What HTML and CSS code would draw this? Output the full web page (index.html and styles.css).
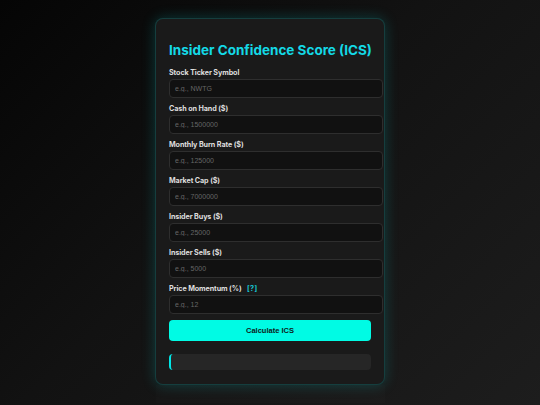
FILE: index.html
```html
<!DOCTYPE html>
<html lang="en">
<head>
<meta charset="utf-8">
<title>Insider Confidence Score</title>
<link rel="stylesheet" href="styles.css">
</head>
<body>
<div class="page">
  <div class="card">
    <h1 class="title">Insider Confidence Score (ICS)</h1>
    <div class="group">
      <label class="label">Stock Ticker Symbol</label>
      <input class="field" type="text" placeholder="e.g., NWTG">
    </div>
    <div class="group">
      <label class="label">Cash on Hand ($)</label>
      <input class="field" type="text" placeholder="e.g., 1500000">
    </div>
    <div class="group">
      <label class="label">Monthly Burn Rate ($)</label>
      <input class="field" type="text" placeholder="e.g., 125000">
    </div>
    <div class="group">
      <label class="label">Market Cap ($)</label>
      <input class="field" type="text" placeholder="e.g., 7000000">
    </div>
    <div class="group">
      <label class="label">Insider Buys ($)</label>
      <input class="field" type="text" placeholder="e.g., 25000">
    </div>
    <div class="group">
      <label class="label">Insider Sells ($)</label>
      <input class="field" type="text" placeholder="e.g., 5000">
    </div>
    <div class="group">
      <label class="label">Price Momentum (%) <span class="help">[?]</span></label>
      <input class="field" type="text" placeholder="e.g., 12">
    </div>
    <button class="btn" type="button">Calculate ICS</button>
    <div class="result"></div>
  </div>
  <div class="tail"></div>
</div>
</body>
</html>
```
FILE: styles.css
```css
* { box-sizing: content-box; }
html, body { margin: 0; padding: 0; }
body {
  height: 405px;
  background: linear-gradient(135deg, #050505 0%, #121212 45%, #1d1d1d 100%);
  font-family: Inter, "Noto Sans", sans-serif;
  overflow: hidden;
}
.page {
  display: flex;
  flex-direction: column;
  align-items: center;
  padding-top: 18px;
}
.card {
  width: 202px;
  padding: 22px 13px 14px 13px;
  background: #1a1a1a;
  border: 1px solid rgba(0, 230, 230, 0.18);
  border-radius: 8px;
  box-shadow: 0 0 14px rgba(0, 220, 220, 0.22);
}
.title {
  margin: 0 0 9px 0;
  font-size: 13.5px;
  line-height: 18px;
  font-weight: 700;
  color: #14d9e6;
  white-space: nowrap;
}
.group { margin-bottom: 6px; }
.label {
  display: block;
  font-size: 7.2px;
  line-height: 10px;
  font-weight: 700;
  letter-spacing: -0.1px;
  color: #dedede;
  margin-bottom: 1px;
}
.help { color: #17c9d6; margin-left: 4px; letter-spacing: 0.3px; }
.field {
  display: block;
  width: 202px;
  height: 17px;
  padding: 0 5px;
  margin: 0;
  background: #111111;
  border: 1px solid #2e2e2e;
  border-radius: 4px;
  color: #ddd;
  font-family: "Liberation Sans", Arial, sans-serif;
  font-size: 7px;
  outline: none;
}
.field::placeholder { color: #666666; }
.btn {
  display: block;
  width: 202px;
  height: 21px;
  margin: 5px 0 0 0;
  padding: 0;
  background: #00fbe4;
  border: none;
  border-radius: 4px;
  color: #0e1a1a;
  font-family: "Liberation Sans", Arial, sans-serif;
  font-size: 7.5px;
  font-weight: 700;
}
.result {
  height: 16px;
  margin-top: 13px;
  background: #262626;
  border-left: 2px solid #00e6e6;
  border-radius: 4px;
  width: 200px;
}
.tail {
  width: 229px;
  height: 18px;
  background: rgba(255,255,255,0.012);
}
```
